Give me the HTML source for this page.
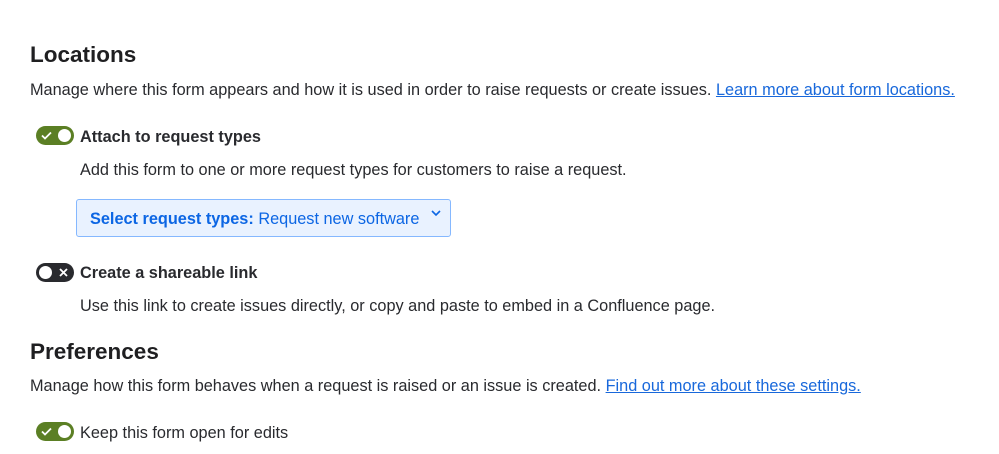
<!DOCTYPE html>
<html><head><style>
body{margin:0;width:999px;height:454px;background:#fff;font-family:"Liberation Sans",sans-serif;color:#292a2e;position:relative;overflow:hidden}
.a{position:absolute;white-space:nowrap}
h2{position:absolute;margin:0;font-size:22.5px;font-weight:bold;color:#1f1f21;left:30px}
.t{font-size:16.3px;}
a{color:#1868db;text-decoration:underline}
.b{font-weight:bold;font-size:16.3px}
.tg{position:absolute;width:38px;height:19px;border-radius:10px}
.tg .k{position:absolute;top:3px;width:13px;height:13px;border-radius:50%;background:#fff}
.dd{position:absolute;left:76px;top:199px;width:373px;height:36px;border:1px solid #85b8ff;border-radius:3px;background:#e9f2ff;color:#0c66e4;font-size:16.3px}
</style></head><body>
<h2 style="top:42px">Locations</h2>
<div class="a t" style="left:30px;top:81px">Manage where this form appears and how it is used in order to raise requests or create issues. <a>Learn more about form locations.</a></div>

<div class="tg" style="left:36px;top:126px;background:#5b7f24"><svg style="position:absolute;left:5px;top:5px" width="11" height="9" viewBox="0 0 11 9"><path d="M1 4.5L4 7.5L10 1.5" fill="none" stroke="#fff" stroke-width="1.8"/></svg><div class="k" style="left:22px"></div></div>
<div class="a b" style="left:80px;top:128px">Attach to request types</div>
<div class="a t" style="left:80px;top:161px">Add this form to one or more request types for customers to raise a request.</div>
<div class="dd"><span class="a" style="left:13px;top:10px"><b>Select request types:</b> Request new software</span>
<svg style="position:absolute;left:354px;top:9px" width="10" height="8" viewBox="0 0 10 8"><path d="M1 2L5 6L9 2" fill="none" stroke="#0c66e4" stroke-width="1.6"/></svg></div>

<div class="tg" style="left:36px;top:263px;background:#292a2e"><div class="k" style="left:3px"></div><svg style="position:absolute;left:23px;top:5px" width="9" height="9" viewBox="0 0 9 9"><path d="M1 1L8 8M8 1L1 8" stroke="#fff" stroke-width="1.8"/></svg></div>
<div class="a b" style="left:80px;top:264px">Create a shareable link</div>
<div class="a t" style="left:80px;top:297px">Use this link to create issues directly, or copy and paste to embed in a Confluence page.</div>

<h2 style="top:339px">Preferences</h2>
<div class="a t" style="left:30px;top:377px">Manage how this form behaves when a request is raised or an issue is created. <a>Find out more about these settings.</a></div>

<div class="tg" style="left:36px;top:422px;background:#5b7f24"><svg style="position:absolute;left:5px;top:5px" width="11" height="9" viewBox="0 0 11 9"><path d="M1 4.5L4 7.5L10 1.5" fill="none" stroke="#fff" stroke-width="1.8"/></svg><div class="k" style="left:22px"></div></div>
<div class="a t" style="left:80px;top:424px">Keep this form open for edits</div>
</body></html>
